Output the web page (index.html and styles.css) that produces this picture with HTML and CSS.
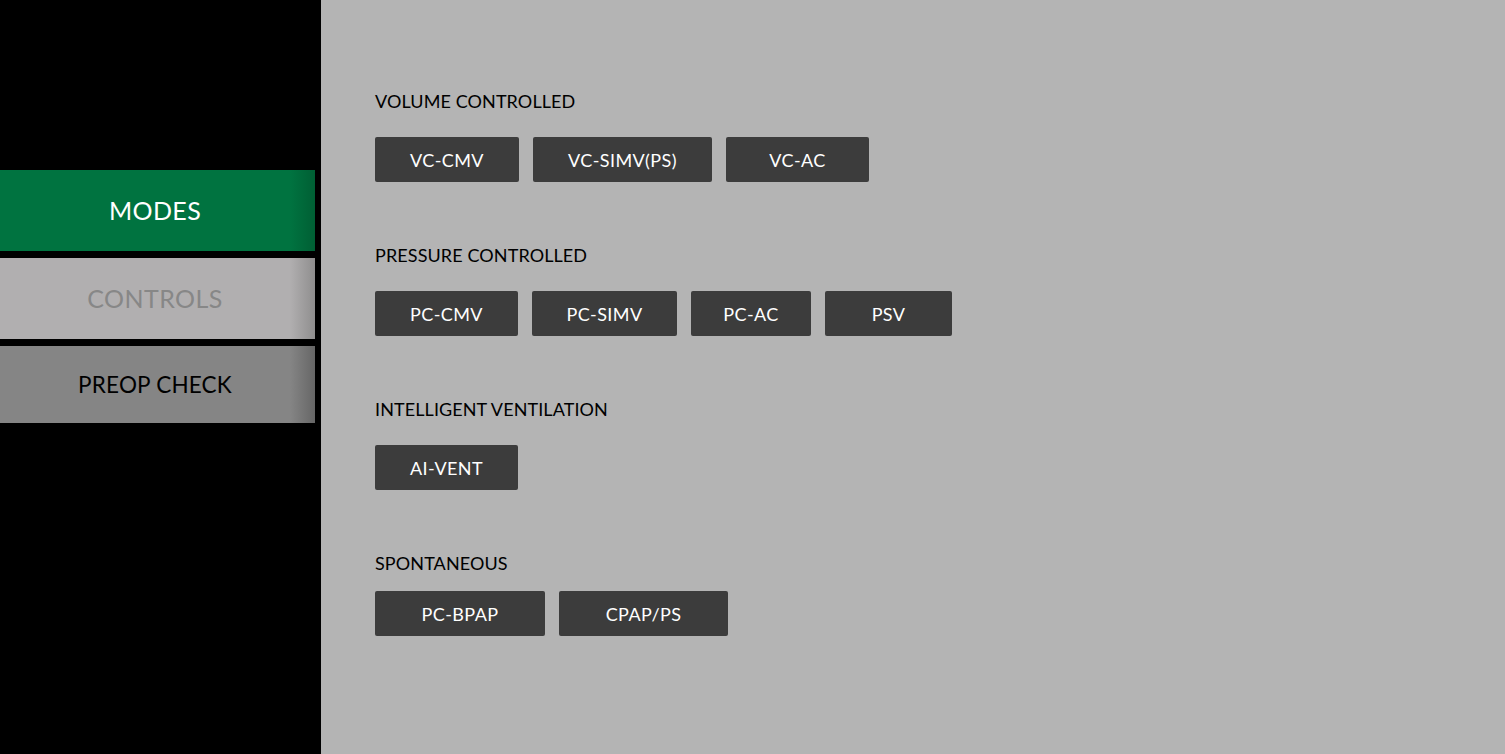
FILE: index.html
```html
<!DOCTYPE html>
<html>
<head>
<meta charset="utf-8">
<link rel="stylesheet" href="styles.css">
</head>
<body>
<div class="app">
  <nav class="sidebar">
    <div class="tab tab-active">MODES</div>
    <div class="tab tab-controls">CONTROLS</div>
    <div class="tab tab-preop">PREOP CHECK</div>
  </nav>
  <main class="main">
    <section class="group">
      <h2 class="heading">VOLUME CONTROLLED</h2>
      <div class="row">
        <button class="mode w144">VC-CMV</button>
        <button class="mode w179">VC-SIMV(PS)</button>
        <button class="mode w143">VC-AC</button>
      </div>
    </section>
    <section class="group">
      <h2 class="heading">PRESSURE CONTROLLED</h2>
      <div class="row">
        <button class="mode w143">PC-CMV</button>
        <button class="mode w145">PC-SIMV</button>
        <button class="mode w120">PC-AC</button>
        <button class="mode w127">PSV</button>
      </div>
    </section>
    <section class="group">
      <h2 class="heading">INTELLIGENT VENTILATION</h2>
      <div class="row">
        <button class="mode w143">AI-VENT</button>
      </div>
    </section>
    <section class="group group-last">
      <h2 class="heading">SPONTANEOUS</h2>
      <div class="row">
        <button class="mode w170">PC-BPAP</button>
        <button class="mode w169">CPAP/PS</button>
      </div>
    </section>
  </main>
</div>
</body>
</html>
```
FILE: styles.css
```css
* { box-sizing: border-box; }
html, body {
  margin: 0;
  padding: 0;
  height: 100%;
}
body {
  font-family: Lato, "Open Sans", "Liberation Sans", sans-serif;
  background: #b4b4b4;
}
.app {
  display: flex;
  width: 1505px;
  height: 754px;
}
.sidebar {
  width: 321px;
  flex: none;
  background: #000;
  padding-top: 170px;
  display: flex;
  flex-direction: column;
  gap: 7px;
}
.tab {
  width: 315px;
  height: 81px;
  display: flex;
  align-items: center;
  justify-content: center;
  padding: 0 5px 2px 0;
  font-size: 25px;
  letter-spacing: 0.4px;
}
.tab-active {
  background: linear-gradient(to right, #007340 0, #007340 290px, #005f34 315px);
  color: #fff;
}
.tab-controls {
  background: linear-gradient(to right, #b1afb0 0, #b1afb0 290px, #8f8e8e 315px);
  color: #878787;
}
.tab-preop {
  height: 77px;
  background: linear-gradient(to right, #858585 0, #858585 290px, #666 315px);
  color: #000;
  font-size: 22.5px;
  letter-spacing: 0.2px;
  padding-bottom: 0;
}
.main {
  flex: 1;
  background: #b4b4b4;
  padding: 91px 0 0 54px;
}
.group {
  margin-bottom: 63px;
}
.heading {
  margin: 0 0 26px;
  font-size: 18px;
  line-height: 20px;
  font-weight: 400;
  color: #000;
  letter-spacing: 0.1px;
}
.group-last .heading {
  margin-bottom: 18px;
}
.row {
  display: flex;
  gap: 14px;
}
.mode {
  height: 45px;
  border: none;
  border-radius: 2px;
  background: #3c3c3c;
  color: #fff;
  font-family: inherit;
  font-size: 18px;
  letter-spacing: 0.4px;
  padding: 0;
  display: flex;
  align-items: center;
  justify-content: center;
}
.w120 { width: 120px; }
.w127 { width: 127px; }
.w143 { width: 143px; }
.w144 { width: 144px; }
.w145 { width: 145px; }
.w169 { width: 169px; }
.w170 { width: 170px; }
.w179 { width: 179px; }
```
